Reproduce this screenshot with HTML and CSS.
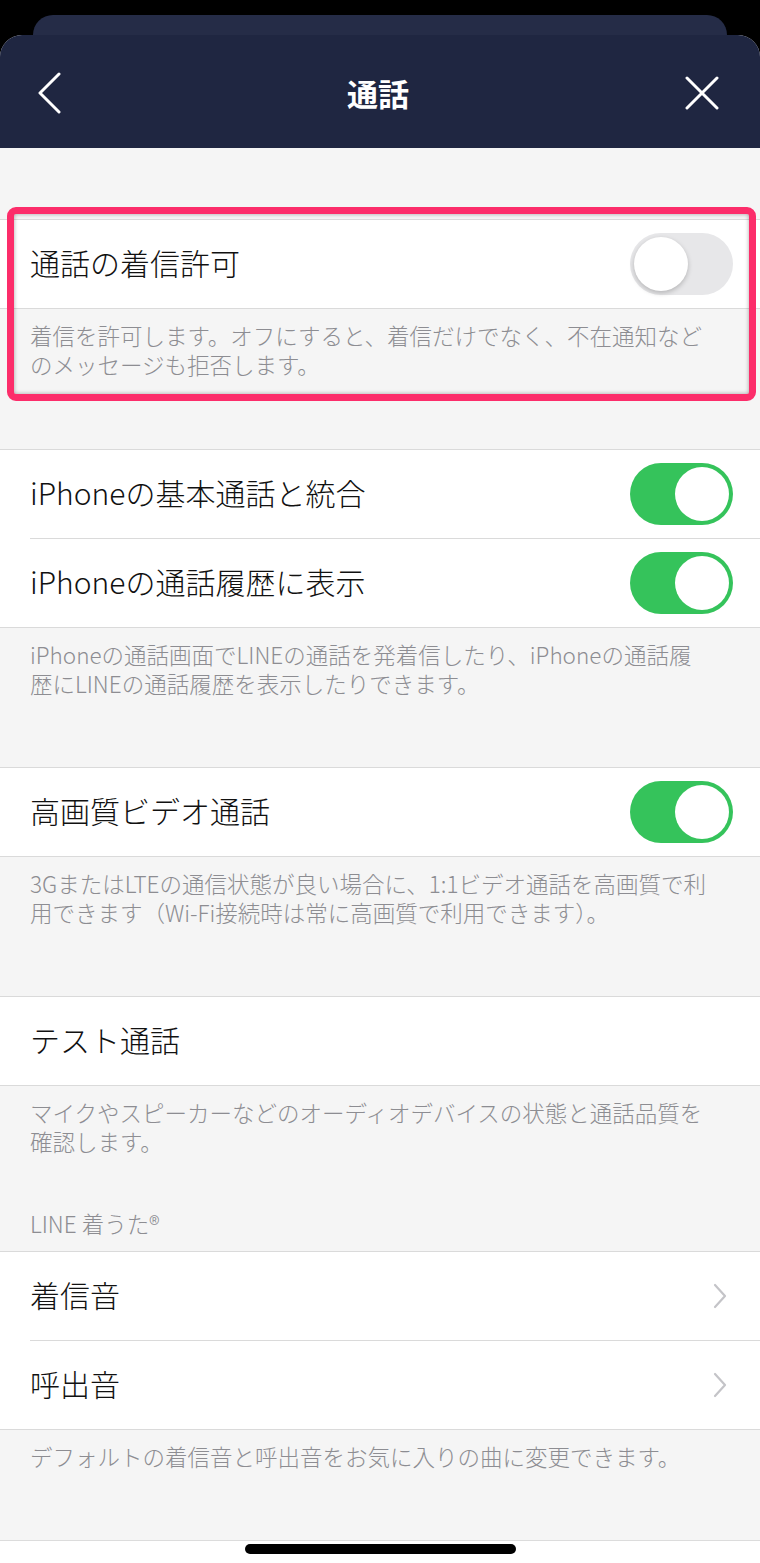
FILE: index.html
```html
<!DOCTYPE html>
<html lang="ja">
<head>
	<meta charset="UTF-8">
	<meta name="viewport" content="width=device-width, initial-scale=1.0">
	<title>通話</title>
	<link rel="stylesheet" href="styles.css">
</head>
<body>
	<div class="screen">
		<div class="back-card"></div>
		<div class="sheet">
			<div class="nav">
				<svg class="nav-back" width="26" height="42" viewBox="0 0 26 42">
					<polyline points="22,2 3,21 22,40" fill="none" stroke="#fff" stroke-width="3" stroke-linecap="round" stroke-linejoin="round"/>
				</svg>
				<div class="nav-title">通話</div>
				<svg class="nav-close" width="34" height="34" viewBox="0 0 34 34">
					<path d="M2 2 L32 32 M32 2 L2 32" fill="none" stroke="#fff" stroke-width="3" stroke-linecap="round"/>
				</svg>
			</div>

			<div class="content">
				<div class="highlight-wrap">
					<div class="group">
						<div class="row">
							<span class="label">通話の着信許可</span>
							<span class="toggle"></span>
						</div>
					</div>
					<p class="desc">着信を許可します。オフにすると、着信だけでなく、不在通知など<br>のメッセージも拒否します。</p>
					<div class="highlight"></div>
				</div>

				<div class="group">
					<div class="row">
						<span class="label">iPhoneの基本通話と統合</span>
						<span class="toggle on"></span>
					</div>
					<div class="row">
						<span class="label">iPhoneの通話履歴に表示</span>
						<span class="toggle on"></span>
					</div>
				</div>
				<p class="desc">iPhoneの通話画面でLINEの通話を発着信したり、iPhoneの通話履<br>歴にLINEの通話履歴を表示したりできます。</p>

				<div class="group">
					<div class="row">
						<span class="label">高画質ビデオ通話</span>
						<span class="toggle on"></span>
					</div>
				</div>
				<p class="desc">3GまたはLTEの通信状態が良い場合に、1:1ビデオ通話を高画質で利<br>用できます（Wi-Fi接続時は常に高画質で利用できます）。</p>

				<div class="group">
					<div class="row">
						<span class="label">テスト通話</span>
					</div>
				</div>
				<p class="desc short">マイクやスピーカーなどのオーディオデバイスの状態と通話品質を<br>確認します。</p>

				<div class="section-title">LINE 着うた®</div>
				<div class="group">
					<div class="row">
						<span class="label">着信音</span>
						<svg class="chevron" width="16" height="26" viewBox="0 0 16 26">
							<polyline points="3,2 13,13 3,24" fill="none" stroke="#c4c4c8" stroke-width="2.2" stroke-linecap="round" stroke-linejoin="round"/>
						</svg>
					</div>
					<div class="row">
						<span class="label">呼出音</span>
						<svg class="chevron" width="16" height="26" viewBox="0 0 16 26">
							<polyline points="3,2 13,13 3,24" fill="none" stroke="#c4c4c8" stroke-width="2.2" stroke-linecap="round" stroke-linejoin="round"/>
						</svg>
					</div>
				</div>
				<p class="desc last">デフォルトの着信音と呼出音をお気に入りの曲に変更できます。</p>
			</div>

			<div class="home-area">
				<div class="home-bar"></div>
			</div>
		</div>
	</div>
</body>
</html>
```

FILE: styles.css
```css
body {
	margin: 0;
	background-color: #000;
	font-family: "Noto Sans CJK JP", "Noto Sans", sans-serif;
}

.screen {
	width: 760px;
	height: 1563px;
	display: flex;
	flex-direction: column;
	overflow: hidden;
}

.back-card {
	flex: none;
	height: 20px;
	margin: 15px 33px 0;
	background-color: #252c47;
	border-radius: 22px 22px 0 0;
}

.sheet {
	flex: 1;
	display: flex;
	flex-direction: column;
	background-color: #f5f5f5;
	border-radius: 22px 22px 0 0;
	overflow: hidden;
}

.nav {
	flex: none;
	height: 113px;
	display: grid;
	grid-template-columns: 1fr auto 1fr;
	align-items: center;
	padding: 0 41px 0 37px;
	background-color: #1f2641;
}

.nav-back {
	justify-self: start;
	margin-top: 2px;
}

.nav-close {
	justify-self: end;
	margin-top: 2px;
}

.nav-title {
	color: #fff;
	font-size: 31px;
	font-weight: bold;
	margin-top: 2px;
}

.content {
	flex: 1;
	display: flex;
	flex-direction: column;
	padding-top: 71px;
}

.highlight-wrap {
	position: relative;
}

.highlight-wrap .desc {
	padding-bottom: 70px;
}

.highlight {
	position: absolute;
	top: -12px;
	left: 7px;
	right: 4px;
	height: 194px;
	box-sizing: border-box;
	border: 7px solid #fc2d6a;
	border-radius: 9px;
	box-shadow: inset 0 0 4px rgba(0, 0, 0, 0.35);
}

.group {
	background-color: #fff;
	border-top: 1px solid #dadada;
	border-bottom: 1px solid #dadada;
}

.row {
	height: 88px;
	margin-left: 30px;
	padding-right: 27px;
	display: flex;
	align-items: center;
	justify-content: space-between;
}

.row + .row {
	border-top: 1px solid #dadada;
}

.label {
	font-size: 30px;
	font-weight: 300;
	color: #111;
	margin-bottom: 4px;
}

.toggle {
	position: relative;
	width: 103px;
	height: 62px;
	border-radius: 31px;
	background-color: #e7e7e9;
}

.toggle::after {
	content: "";
	position: absolute;
	top: 4px;
	left: 4px;
	width: 54px;
	height: 54px;
	border-radius: 50%;
	background-color: #fff;
	box-shadow: 0 2px 5px rgba(0, 0, 0, 0.22);
}

.toggle.on {
	background-color: #35c35b;
}

.toggle.on::after {
	left: auto;
	right: 4px;
	box-shadow: none;
}

.chevron {
	margin-right: 5px;
}

.desc {
	margin: 0;
	padding: 12px 30px 69px;
	font-size: 22.5px;
	font-weight: 300;
	line-height: 29px;
	color: #8d8d92;
}

.desc.short {
	padding-bottom: 53px;
}

.desc.last {
	flex: 1;
	padding-bottom: 0;
	border-bottom: 1px solid #dcdcdc;
}

.section-title {
	padding: 0 30px 13px;
	font-size: 22.5px;
	font-weight: 300;
	line-height: 29px;
	color: #8d8d92;
}

.home-area {
	flex: none;
	height: 22px;
	background-color: #fff;
	display: flex;
	justify-content: center;
	padding-top: 3px;
	box-sizing: border-box;
}

.home-bar {
	width: 271px;
	height: 10px;
	border-radius: 5px;
	background-color: #000;
}
```
